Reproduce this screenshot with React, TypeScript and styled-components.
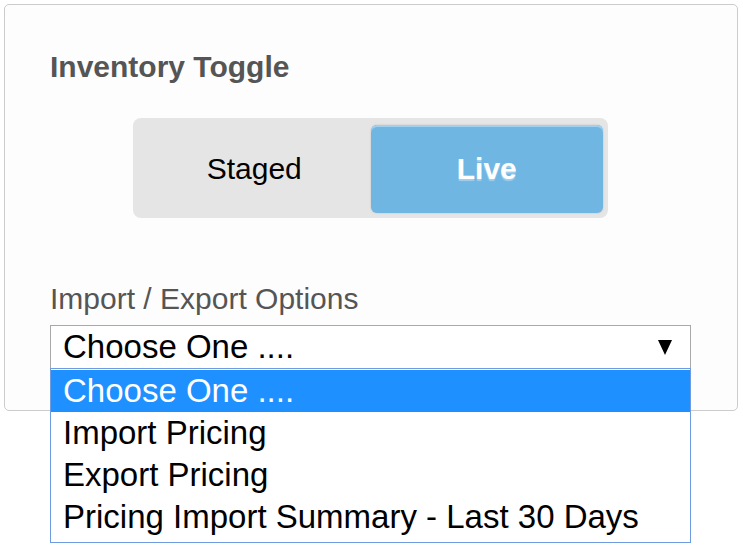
import styled, { createGlobalStyle } from 'styled-components'

const GlobalStyle = createGlobalStyle`
  html, body {
    margin: 0;
    padding: 0;
    background: #ffffff;
    font-family: "Liberation Sans", Arial, sans-serif;
  }
`

const Page = styled.div`
  min-height: 550px;
  box-sizing: border-box;
  padding: 4px 5px 0 4px;
`

const Card = styled.section`
  border: 1px solid #cccccc;
  border-radius: 5px;
  background: #fdfdfd;
  padding: 45px 46px 41px 45px;
  display: flex;
  flex-direction: column;
`

const Title = styled.h2`
  margin: 0;
  font-size: 30px;
  line-height: 34px;
  font-weight: 700;
  color: #555555;
`

const Toggle = styled.div`
  align-self: center;
  width: 475px;
  height: 100px;
  margin-top: 34px;
  box-sizing: border-box;
  padding: 7px 5px 5px 5px;
  background: #e5e5e5;
  border-radius: 8px;
  display: grid;
  grid-template-columns: 1fr 1fr;
`

const ToggleOption = styled.div<{ $active?: boolean }>`
  display: flex;
  align-items: center;
  justify-content: center;
  font-size: 30px;
  border-radius: 6px;
  color: ${({ $active }) => ($active ? '#ffffff' : '#000000')};
  font-weight: ${({ $active }) => ($active ? 700 : 400)};
  background: ${({ $active }) => ($active ? '#6fb6e3' : 'transparent')};
  box-shadow: ${({ $active }) =>
    $active ? 'inset 0 2px 0 #9fd0ef, 0 0 2px rgba(0, 0, 0, 0.18)' : 'none'};
  text-shadow: ${({ $active }) => ($active ? '0 2px 1px rgba(255, 255, 255, 0.35)' : 'none')};
`

const Label = styled.label`
  margin-top: 64px;
  font-size: 30px;
  line-height: 34px;
  color: #555555;
`

const SelectWrap = styled.div`
  position: relative;
  margin-top: 9px;
`

const SelectBox = styled.div`
  height: 44px;
  box-sizing: border-box;
  border: 1px solid #a9a9a9;
  background: #ffffff;
  display: flex;
  align-items: center;
  justify-content: space-between;
  padding: 0 18px 0 12px;
  font-size: 33px;
  color: #000000;
`

const Caret = styled.svg`
  width: 14px;
  height: 15px;
  display: block;
`

const OptionList = styled.ul`
  position: absolute;
  left: 0;
  right: 0;
  top: 43px;
  margin: 0;
  padding: 1px 0 4px;
  list-style: none;
  background: #ffffff;
  border: 1px solid #6f9be0;
  z-index: 2;
`

const Option = styled.li<{ $selected?: boolean }>`
  height: 42px;
  display: flex;
  align-items: center;
  padding: 0 12px;
  font-size: 33px;
  color: ${({ $selected }) => ($selected ? '#ffffff' : '#000000')};
  background: ${({ $selected }) => ($selected ? '#1e90ff' : 'transparent')};
`

const options = ['Choose One ....', 'Import Pricing', 'Export Pricing', 'Pricing Import Summary - Last 30 Days']

export default function App() {
  return (
    <Page>
      <GlobalStyle />
      <Card>
        <Title>Inventory Toggle</Title>
        <Toggle>
          <ToggleOption>Staged</ToggleOption>
          <ToggleOption $active>Live</ToggleOption>
        </Toggle>
        <Label>Import / Export Options</Label>
        <SelectWrap>
          <SelectBox>
            <span>Choose One ....</span>
            <Caret viewBox="0 0 14 15">
              <polygon points="0,0 14,0 7,15" fill="#000" />
            </Caret>
          </SelectBox>
          <OptionList>
            {options.map((o, i) => (
              <Option key={o} $selected={i === 0}>
                {o}
              </Option>
            ))}
          </OptionList>
        </SelectWrap>
      </Card>
    </Page>
  )
}
